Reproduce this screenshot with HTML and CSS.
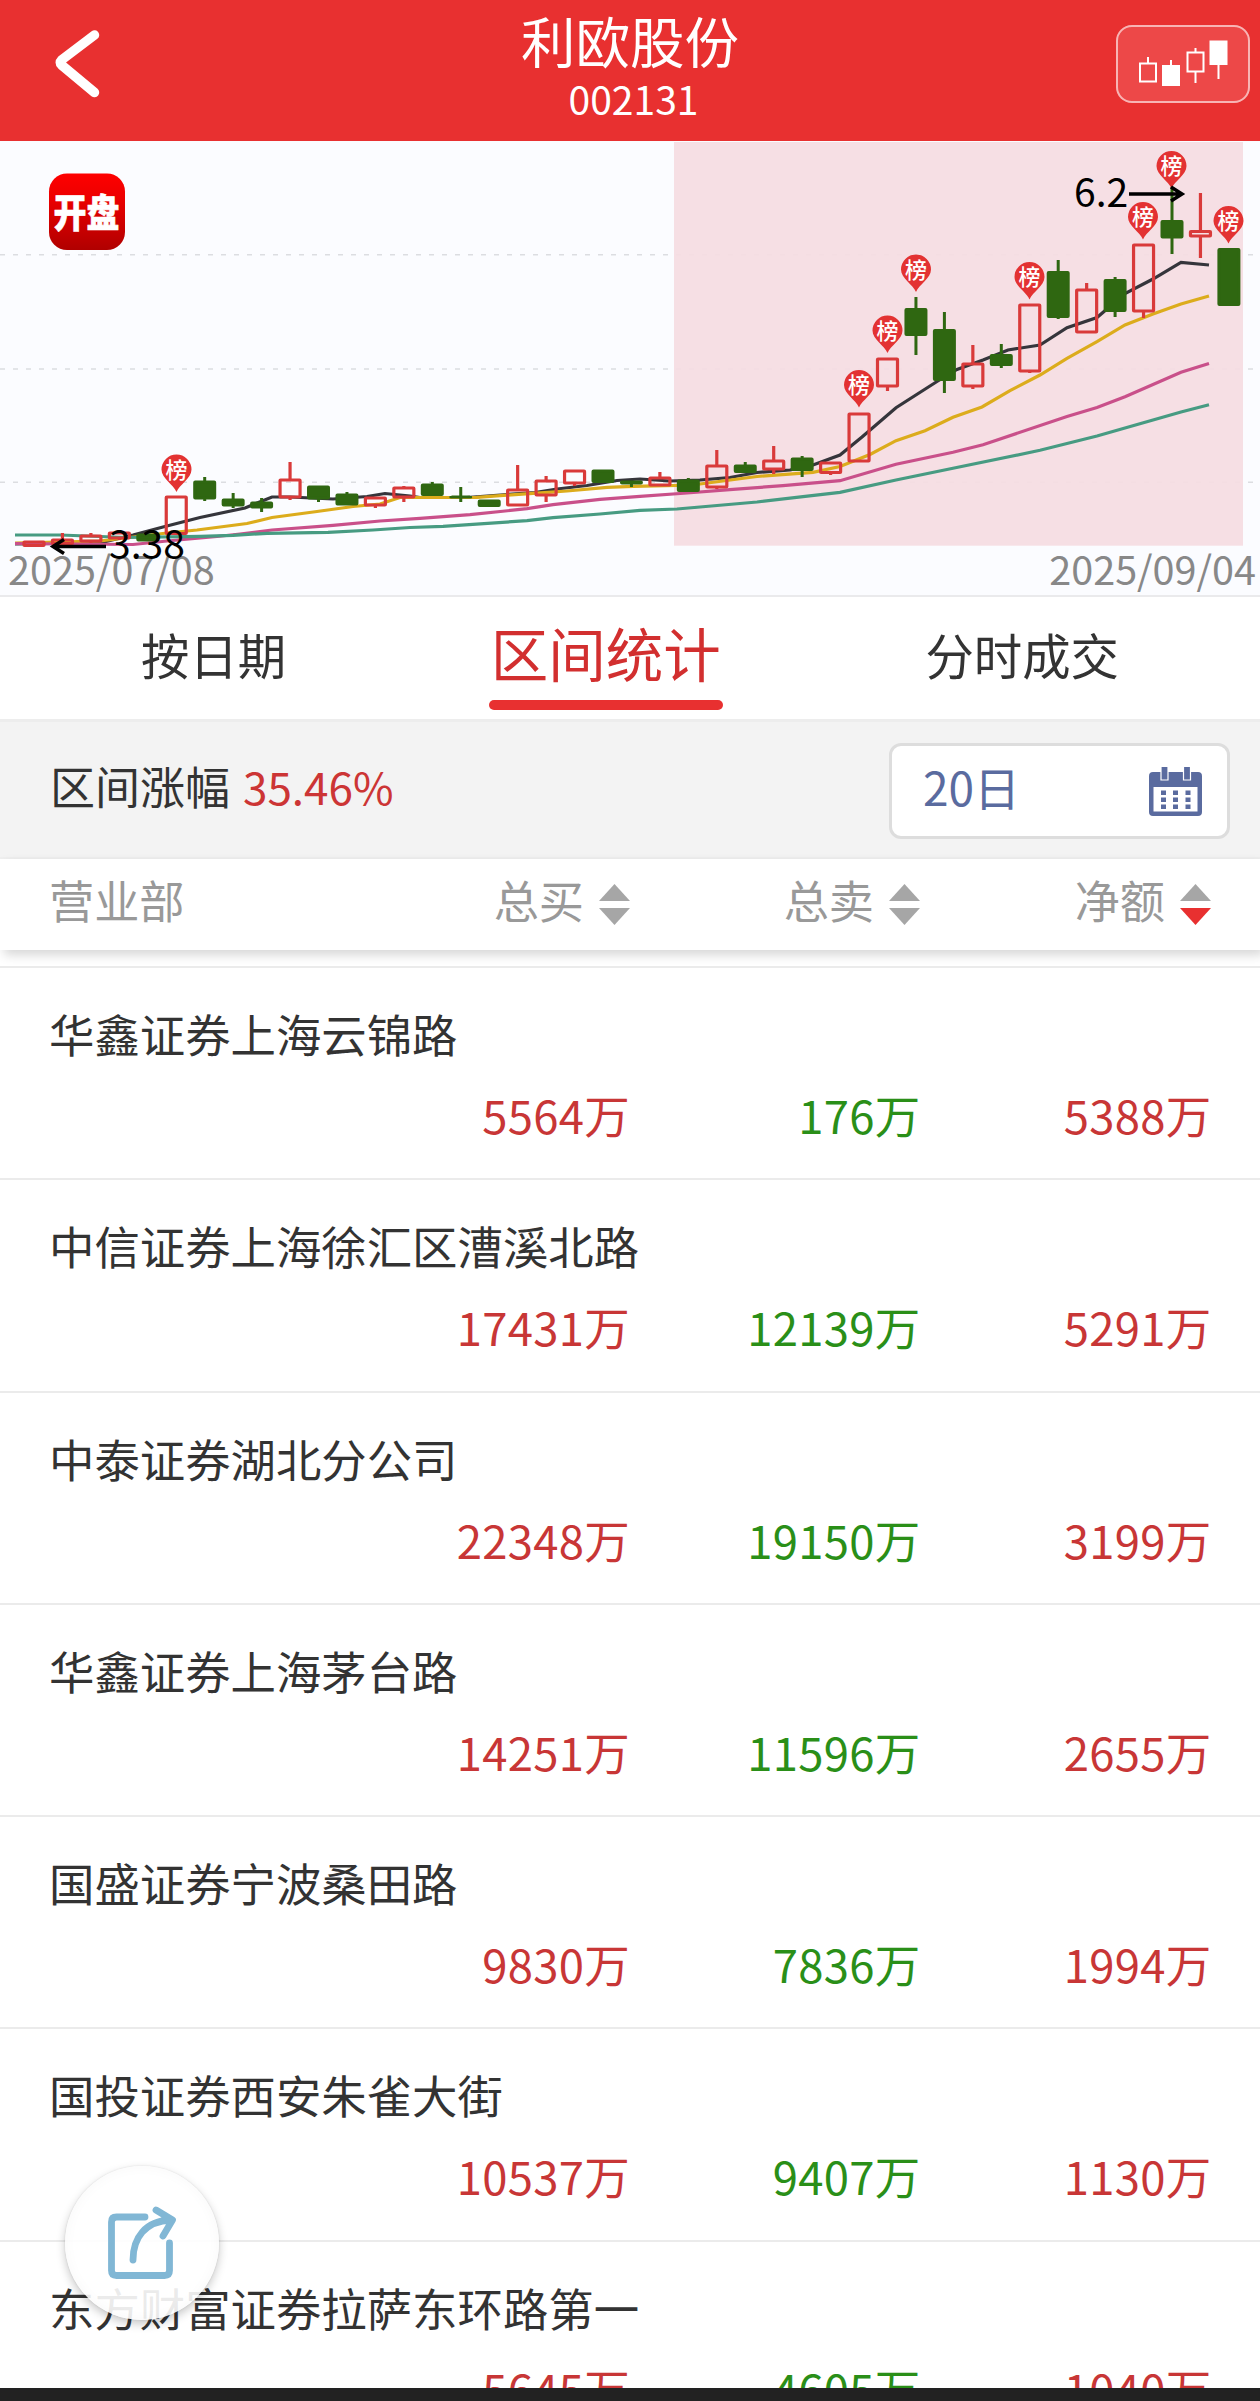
FILE: index.html
```html
<!DOCTYPE html>
<html lang="zh-CN">

<head>
    <meta charset="UTF-8">
    <meta name="viewport" content="width=device-width, initial-scale=1.0">
    <title>利欧股份 002131</title>
    <link rel="stylesheet" href="styles.css">
    <script src="chart.js" defer></script>
</head>

<body>
    <div class="page">
        <!-- 顶部标题栏 -->
        <header class="header">
            <svg class="back" viewBox="0 0 60 90" width="60" height="90">
                <path d="M49.500 17 L16.500 42 Q14 44.500 16.500 47 L49.500 74.500" />
            </svg>
            <div class="title">
                <h1>利欧股份</h1>
                <p>002131</p>
            </div>
            <div class="kline-btn">
                <svg viewBox="0 0 134 78" width="134" height="78">
                    <path class="line" d="M24 38.500h16v18h-16z M32 38v-6 M55 40v-5 M71.500 27.500h16v19h-16z M79.500 27v-4 M79.500 47v11 M102.500 40v14" />
                    <path class="fill" d="M46 40h18v21h-18z M93.500 15.500h18v24.500h-18z" />
                </svg>
            </div>
        </header>

        <!-- K 线图 -->
        <div class="chart">
            <svg id="kline" viewBox="0 141 1260 454" width="1260" height="454">
                <defs>
                    <linearGradient id="logoBg" x1="0" y1="0" x2="0" y2="1">
                        <stop offset="0" stop-color="#fe0000" />
                        <stop offset="0.3" stop-color="#ee0000" />
                        <stop offset="1" stop-color="#b00000" />
                    </linearGradient>
                </defs>
                <path class="grid" d="M0 254.700H1260 M0 369H1260 M0 482.300H1260" />
                <rect class="range" x="674" y="142" width="569" height="403.700" />
                <rect x="49" y="173.500" width="76" height="76.500" rx="18" fill="url(#logoBg)" />
                <text class="logo-text" transform="translate(53.500 227) scale(0.845 1)">开盘</text>
                <text class="date" x="8" y="585">2025/07/08</text>
                <text class="date" x="1256" y="585" text-anchor="end">2025/09/04</text>
                <g id="lines"></g>
                <g id="candles"></g>
                <g id="pins"></g>
                <path class="arrow" d="M1129 194H1181 M1171 187L1182 194L1171 201" />
                <text class="price" x="1074" y="207">6.2</text>
                <path class="arrow" d="M106 546.500H54 M64 539.500L53 546.500L64 553.500" />
                <text class="price" x="109" y="559">3.38</text>
            </svg>
        </div>

        <!-- 选项卡 -->
        <nav class="tabs">
            <a class="tab">按日期</a>
            <a class="tab active">区间统计</a>
            <a class="tab">分时成交</a>
        </nav>

        <!-- 区间选择 -->
        <div class="filter">
            <span class="filter-label">区间涨幅</span>
            <span class="filter-value">35.46%</span>
            <div class="select">
                <span>20日</span>
                <svg viewBox="0 0 53 49" width="53" height="49">
                    <path fill="#5a6b9f" fill-rule="evenodd" d="M4 5H49Q53 5 53 9V45Q53 49 49 49H4Q0 49 0 45V9Q0 5 4 5Z M4.500 20V44.500H48.500V20Z" />
                    <path fill="#5a6b9f" stroke="#fff" stroke-width="1.200" d="M12 -1h7v14h-7z M34.500 -1h7v14h-7z" />
                    <path fill="#5a6b9f" d="M12 23.500h5v4.500h-5z M24 23.500h5v4.500h-5z M36.500 23.500h5v4.500h-5z M12 30.500h5v4.500h-5z M24 30.500h5v4.500h-5z M36.500 30.500h5v4.500h-5z M12 37.500h5v4.500h-5z M24 37.500h5v4.500h-5z M36.500 37.500h5v4.500h-5z" />
                </svg>
            </div>
        </div>

        <!-- 表头 -->
        <div class="thead">
            <span>营业部</span>
            <span class="sort">总买<i class="arrows"></i></span>
            <span class="sort">总卖<i class="arrows"></i></span>
            <span class="sort desc">净额<i class="arrows"></i></span>
        </div>

        <!-- 营业部列表 -->
        <ul class="list">
            <li>
                <p class="name">华鑫证券上海云锦路</p>
                <span class="red">5564万</span>
                <span class="green">176万</span>
                <span class="red">5388万</span>
            </li>
            <li>
                <p class="name">中信证券上海徐汇区漕溪北路</p>
                <span class="red">17431万</span>
                <span class="green">12139万</span>
                <span class="red">5291万</span>
            </li>
            <li>
                <p class="name">中泰证券湖北分公司</p>
                <span class="red">22348万</span>
                <span class="green">19150万</span>
                <span class="red">3199万</span>
            </li>
            <li>
                <p class="name">华鑫证券上海茅台路</p>
                <span class="red">14251万</span>
                <span class="green">11596万</span>
                <span class="red">2655万</span>
            </li>
            <li>
                <p class="name">国盛证券宁波桑田路</p>
                <span class="red">9830万</span>
                <span class="green">7836万</span>
                <span class="red">1994万</span>
            </li>
            <li>
                <p class="name">国投证券西安朱雀大街</p>
                <span class="red">10537万</span>
                <span class="green">9407万</span>
                <span class="red">1130万</span>
            </li>
            <li>
                <p class="name">东方财富证券拉萨东环路第一</p>
                <span class="red">5645万</span>
                <span class="green">4605万</span>
                <span class="red">1040万</span>
            </li>
        </ul>
        <div class="bottom-bar"></div>

        <!-- 悬浮分享按钮 -->
        <div class="share">
            <svg viewBox="0 0 154 154" width="154" height="154">
                <path d="M80 51H51.500Q46.500 51 46.500 56V104.500Q46.500 109.500 51.500 109.500H99.500Q104.500 109.500 104.500 104.500V77" />
                <path d="M68 94C68 72 80 55 106 54 M91 44L107.500 54L98 70" />
            </svg>
        </div>
    </div>
</body>

</html>
```
FILE: styles.css
```css
* {
    margin: 0;
    padding: 0;
    box-sizing: border-box;
}

body {
    font-family: "Noto Sans CJK SC", sans-serif;
    color: #333;
    background-color: #fff;
}

.page {
    position: relative;
    display: flex;
    flex-direction: column;
    width: 1260px;
    height: 2401px;
    overflow: hidden;
}

/* 顶部标题栏 */
.header {
    display: grid;
    grid-template-columns: 1fr auto 1fr;
    flex: none;
    height: 141px;
    padding: 0 10px;
    background-color: #e83030;
    color: #fff;
}

.back {
    margin: 18px 0 0 35px;
    fill: none;
    stroke: #fff;
    stroke-width: 9.5;
    stroke-linecap: round;
    stroke-linejoin: round;
}

.title {
    text-align: center;
}

.title h1 {
    height: 79px;
    line-height: 79px;
    font-size: 54.5px;
    font-weight: 400;
}

.title p {
    padding-left: 7px;
    height: 40px;
    line-height: 38px;
    font-size: 39px;
}

.kline-btn {
    justify-self: end;
    width: 134px;
    height: 78px;
    margin-top: 25px;
    border-radius: 16px;
    background-color: #ed4848;
    box-shadow: inset 0 0 0 2px #f8b4b4;
}

.kline-btn .line {
    fill: none;
    stroke: #fff;
    stroke-width: 2;
}

.kline-btn .fill {
    fill: #fff;
}

/* K 线图 */
.chart {
    flex: none;
    height: 456px;
    background-color: #fbfcff;
    border-bottom: 2px solid #eaeaec;
}

.chart svg {
    display: block;
}

.grid {
    stroke: #dcdde1;
    stroke-width: 1.5;
    stroke-dasharray: 5 8;
}

.range {
    fill: #f5dde2;
    fill-opacity: 0.93;
}

.logo-text {
    font-size: 39px;
    font-weight: 900;
    fill: #fff;
    stroke: #fff;
    stroke-width: 0.6;
}

.date {
    font-size: 39.6px;
    fill: #888;
}

.price {
    font-size: 39px;
    fill: #000;
}

.arrow {
    fill: none;
    stroke: #000;
    stroke-width: 3.5;
}

#lines polyline {
    fill: none;
    stroke-width: 3.2;
}

.up {
    fill: none;
    stroke: #d93a3a;
    stroke-width: 3.2;
}

.down {
    fill: #2f6711;
    stroke: #2f6711;
    stroke-width: 3;
}

.pin path {
    fill: #e33232;
}

.pin text {
    font-size: 22px;
    font-weight: 500;
    fill: #fff;
    text-anchor: middle;
}

/* 选项卡 */
.tabs {
    display: flex;
    flex: none;
    justify-content: space-between;
    height: 122px;
    padding: 0 141px;
}

.tab {
    height: 113px;
    line-height: 114px;
    font-size: 48.4px;
}

.tab.active {
    position: relative;
    padding: 0 2px;
    font-size: 57.5px;
    line-height: 110px;
    color: #d22f2f;
}

.tab.active::after {
    content: "";
    position: absolute;
    left: 0;
    bottom: 0;
    width: 100%;
    height: 10px;
    border-radius: 5px;
    background-color: #e83030;
}

/* 区间选择 */
.filter {
    display: flex;
    flex: none;
    align-items: center;
    height: 140px;
    padding: 3px 30px 0 50px;
    background-color: #f3f3f3;
    border-top: 3px solid #ededed;
    border-bottom: 2px solid #efefef;
    font-size: 45px;
    line-height: 60px;
}

.filter span {
    margin-top: -11px;
}

.filter-value {
    margin-left: 13px;
    font-size: 44px;
    color: #cc3535;
}

.select {
    display: flex;
    align-items: center;
    justify-content: space-between;
    width: 341px;
    height: 96px;
    margin-left: auto;
    padding: 0 25px 0 31px;
    border: 3px solid #ddd;
    border-radius: 12px;
    background-color: #fff;
    font-size: 46px;
    color: #5a6b9f;
}

/* 表头 */
.thead {
    display: grid;
    grid-template-columns: 290px 291px 290px 291px;
    flex: none;
    height: 91px;
    padding-left: 49px;
    line-height: 82px;
    font-size: 45.2px;
    color: #999;
    background-color: #fff;
    box-shadow: 4px 5px 10px rgba(0, 0, 0, 0.16);
    z-index: 1;
}

.sort {
    display: flex;
    justify-content: flex-end;
}

.arrows {
    display: flex;
    flex-direction: column;
    gap: 7px;
    margin: 25px 0 0 15px;
}

.arrows::before,
.arrows::after {
    content: "";
    width: 31px;
    height: 17px;
    background-color: #a6a6a6;
    clip-path: polygon(50% 0, 100% 100%, 0 100%);
}

.arrows::after {
    clip-path: polygon(0 0, 100% 0, 50% 100%);
}

.desc .arrows::after {
    background-color: #e83030;
}

/* 列表 */
.list {
    flex: 1;
    min-height: 0;
    padding-top: 16px;
    overflow: hidden;
    list-style: none;
}

.list li {
    display: grid;
    grid-template-columns: 581px 290.5px 291px;
    grid-template-rows: 82px 82px;
    height: 212.3px;
    padding: 24px 0 0 49px;
    border-top: 2px solid #ebebeb;
    font-size: 45.4px;
    line-height: 82px;
}

.name {
    grid-column: 1 / -1;
}

.list span {
    margin-top: -1px;
    text-align: right;
    letter-spacing: 0.3px;
}

.red {
    color: #c83636;
}

.green {
    color: #2a8f18;
}

.bottom-bar {
    flex: none;
    height: 13px;
    background-color: #222;
}

/* 悬浮分享按钮 */
.share {
    position: absolute;
    left: 65px;
    top: 2166px;
    z-index: 2;
    width: 154px;
    height: 154px;
    border-radius: 50%;
    background-color: rgba(255, 255, 255, 0.9);
    box-shadow: 0 4px 10px rgba(0, 0, 0, 0.22), 0 0 2px rgba(0, 0, 0, 0.12), inset 0 0 14px rgba(0, 0, 0, 0.03);
}

.share path {
    fill: none;
    stroke: #81b7d5;
    stroke-width: 6.8;
    stroke-linecap: round;
    stroke-linejoin: round;
}
```
FILE: chart.js
```js
var NS = 'http://www.w3.org/2000/svg';

// 每根 K 线：[涨跌, 实体上, 实体下, 影线上, 影线下]
var candles = [
    ['up', 542, 545.5, 542, 545], ['up', 540, 543.5, 533, 545], ['up', 536, 541, 533, 543],
    ['up', 533, 538, 531, 540], ['down', 535, 540, 534, 541], ['up', 497, 533.5, 496, 534],
    ['down', 482, 498, 477, 501], ['down', 500, 505, 493, 508], ['down', 503, 507, 498, 512],
    ['up', 480, 497, 462, 500], ['down', 487, 498, 486, 502], ['down', 495, 504, 492, 505],
    ['up', 498, 505, 497, 508], ['up', 488, 497, 486, 502], ['down', 485, 494.5, 482, 496],
    ['down', 497, 497, 487, 502], ['down', 501, 505.5, 501, 507], ['up', 490, 505, 465, 505],
    ['up', 481, 495, 476, 502], ['up', 471, 483, 471, 486], ['down', 471, 481.5, 471, 482],
    ['down', 482, 483, 482, 487], ['up', 478, 485, 472, 486], ['down', 481, 490.5, 478, 491],
    ['up', 466, 487, 450, 489], ['down', 466, 471.5, 462, 472], ['up', 461, 469, 446, 474],
    ['down', 459, 469.5, 456, 477], ['up', 463, 472.5, 463, 475], ['up', 414, 461, 414, 461],
    ['up', 359, 386, 359, 391], ['down', 309.5, 334.5, 297, 355], ['down', 330.5, 379.5, 312, 393],
    ['up', 364, 386, 345, 389], ['down', 355.5, 364.5, 344, 368], ['up', 305, 371, 305, 373],
    ['down', 272.5, 316.5, 260, 319], ['up', 290, 332, 283, 333], ['down', 280.5, 310.5, 277, 317],
    ['up', 245, 311, 245, 318], ['down', 221.5, 237, 187, 254], ['up', 231.5, 236, 193, 258],
    ['down', 249.5, 304.5, 249, 305]
];

// 均线
var lines = {
    '#35353b': '15,544 100,543 133,535 163,527 200,517.5 245,508 272,497 290,497 333,499 367,496.5 385,493.5 410,496 420,497.5 467,497.5 507,494.5 535,492.5 557,489 587,485.5 617,480.5 640,479 670,481 700,480 730,477.5 757,472.5 790,470 813,465 840,455 862,437 896,407.7 937,381.5 957,369.5 983,360 1008,350 1040,345 1067,327.7 1097,317.5 1125,293.5 1153,279 1181,262.3 1209,265',
    '#dcac1c': '15,543 100,541 167,533 197,530 247,523.5 272,517.5 317,511.5 353,506.5 380,504 400,497.5 477,497.3 533,493.3 567,491 607,487.3 633,486.3 677,485.3 700,484 757,476.5 813,472.3 840,466.5 870,454.5 896,440.7 925,430.7 953,417.3 982,407 1010,390.7 1040,375 1067,358.3 1097,341.7 1125,325 1153,314 1181,304 1209,296',
    '#c9508a': '15,543.5 133,544.5 167,541 217,536.5 240,534 272,530 333,525.3 380,521 420,518.3 470,514.7 527,508.7 553,504.7 600,499.3 640,496.3 687,493 733,489.3 783,485.7 840,480.7 896,464.3 953,452.3 983,444.7 1067,416.5 1097,407.5 1125,396.7 1181,372.3 1209,363.5',
    '#479b82': '15,535 60,535 127,537.5 200,536.3 233,535.3 267,533.3 328,532.3 373,530 410,527.5 443,526.3 527,520.7 553,517.7 600,514 640,510.3 677,509 700,507 757,502 803,496.7 840,492.3 896,480 953,468.3 1040,450.3 1097,436 1153,420 1181,412 1209,404.7'
};

// 龙虎榜标记：[x, 顶部 y]
var pins = [
    [176.5, 454.5], [859, 370], [887.5, 315.5], [916, 254.5],
    [1029.5, 262], [1143, 202], [1171.5, 151], [1228.5, 206]
];

function add(parent, tag, attrs) {
    var el = document.createElementNS(NS, tag);
    for (var key in attrs) {
        el.setAttribute(key, attrs[key]);
    }
    parent.appendChild(el);
    return el;
}

var lineBox = document.getElementById('lines');
for (var color in lines) {
    add(lineBox, 'polyline', { points: lines[color], stroke: color });
}

var candleBox = document.getElementById('candles');
for (var i = 0; i < candles.length; i++) {
    var c = candles[i];
    var x = 34 + 28.45 * i;
    // 上下影线
    add(candleBox, 'path', {
        'class': c[0],
        d: 'M' + x + ' ' + c[3] + 'V' + c[1] + 'M' + x + ' ' + c[2] + 'V' + c[4]
    });
    // 实体
    add(candleBox, 'rect', {
        'class': c[0], x: x - 10, y: c[1], width: 20, height: Math.max(c[2] - c[1], 0.1), rx: 0.5
    });
}

var pinBox = document.getElementById('pins');
for (var j = 0; j < pins.length; j++) {
    var g = add(pinBox, 'g', {
        'class': 'pin',
        transform: 'translate(' + pins[j][0] + ' ' + pins[j][1] + ')'
    });
    add(g, 'path', { d: 'M0 37.5C-3 30-15 24-15 15A15 15 0 1 1 15 15C15 24 3 30 0 37.5Z' });
    add(g, 'text', { x: 0, y: 23 }).textContent = '榜';
}
```
